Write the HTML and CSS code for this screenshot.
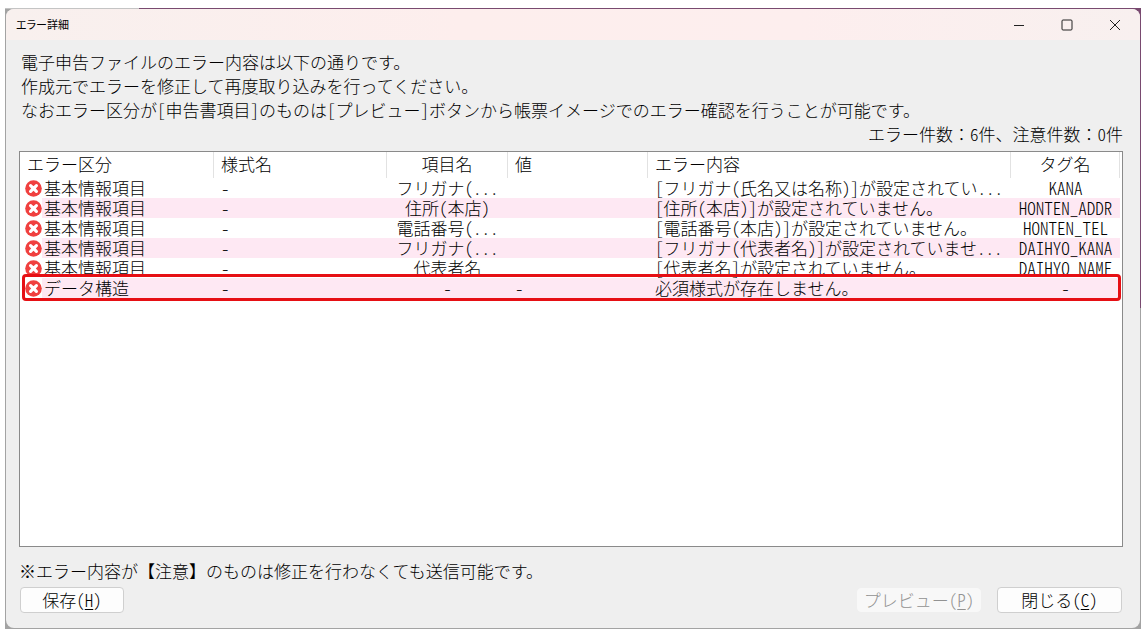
FILE: index.html
```html
<!DOCTYPE html>
<html lang="ja">

<head>
    <meta charset="UTF-8">
    <meta name="viewport" content="width=device-width, initial-scale=1.0">
    <title>エラー詳細</title>
    <link rel="stylesheet" href="styles.css">
</head>

<body>
    <!-- エラーアイコン -->
    <svg class="defs" width="0" height="0">
        <symbol id="err" viewBox="0 0 17 17">
            <circle cx="8.5" cy="8.5" r="8.3" fill="#f0403f" />
            <path d="M5.6 5.6l5.8 5.8M11.4 5.6l-5.8 5.8" stroke="#fff" stroke-width="3.2" stroke-linecap="round" />
        </symbol>
    </svg>

    <div class="frame">
        <div class="dialog">
            <!-- タイトルバー -->
            <header class="titlebar">
                <h1>エラー詳細</h1>
                <div class="controls">
                    <button type="button" aria-label="最小化">
                        <svg width="12" height="12" viewBox="0 0 12 12"><path d="M1 6.5h10" /></svg>
                    </button>
                    <button type="button" aria-label="最大化">
                        <svg width="12" height="12" viewBox="0 0 12 12"><rect x="1" y="1" width="10" height="10" rx="1" /></svg>
                    </button>
                    <button type="button" aria-label="閉じる">
                        <svg width="12" height="12" viewBox="0 0 12 12"><path d="M1 1l10 10M11 1L1 11" /></svg>
                    </button>
                </div>
            </header>

            <main class="content">
                <p class="text">電子申告ファイルのエラー内容は以下の通りです。</p>
                <p class="text">作成元でエラーを修正して再度取り込みを行ってください。</p>
                <p class="text">なおエラー区分が[申告書項目]のものは[プレビュー]ボタンから帳票イメージでのエラー確認を行うことが可能です。</p>
                <p class="count">エラー件数：<span>6</span>件、注意件数：<span>0</span>件</p>

                <!-- エラー一覧 -->
                <div class="list">
                    <table>
                        <colgroup>
                            <col class="col-kubun">
                            <col class="col-yoshiki">
                            <col class="col-item">
                            <col class="col-value">
                            <col>
                            <col class="col-tag">
                        </colgroup>
                        <thead>
                            <tr>
                                <th>エラー区分</th>
                                <th>様式名</th>
                                <th class="center">項目名</th>
                                <th>値</th>
                                <th>エラー内容</th>
                                <th class="center">タグ名</th>
                            </tr>
                        </thead>
                        <tbody>
                            <tr>
                                <td class="kubun"><div><svg><use href="#err" /></svg><span>基本情報項目</span></div></td>
                                <td>-</td>
                                <td class="center">フリガナ(...</td>
                                <td></td>
                                <td>[フリガナ(氏名又は名称)]が設定されてい...</td>
                                <td class="center">KANA</td>
                            </tr>
                            <tr>
                                <td class="kubun"><div><svg><use href="#err" /></svg><span>基本情報項目</span></div></td>
                                <td>-</td>
                                <td class="center">住所(本店)</td>
                                <td></td>
                                <td>[住所(本店)]が設定されていません。</td>
                                <td class="center">HONTEN_ADDR</td>
                            </tr>
                            <tr>
                                <td class="kubun"><div><svg><use href="#err" /></svg><span>基本情報項目</span></div></td>
                                <td>-</td>
                                <td class="center">電話番号(...</td>
                                <td></td>
                                <td>[電話番号(本店)]が設定されていません。</td>
                                <td class="center">HONTEN_TEL</td>
                            </tr>
                            <tr>
                                <td class="kubun"><div><svg><use href="#err" /></svg><span>基本情報項目</span></div></td>
                                <td>-</td>
                                <td class="center">フリガナ(...</td>
                                <td></td>
                                <td>[フリガナ(代表者名)]が設定されていませ...</td>
                                <td class="center">DAIHYO_KANA</td>
                            </tr>
                            <tr>
                                <td class="kubun"><div><svg><use href="#err" /></svg><span>基本情報項目</span></div></td>
                                <td>-</td>
                                <td class="center">代表者名</td>
                                <td></td>
                                <td>[代表者名]が設定されていません。</td>
                                <td class="center">DAIHYO_NAME</td>
                            </tr>
                            <tr class="marked">
                                <td class="kubun"><div><svg><use href="#err" /></svg><span>データ構造</span></div></td>
                                <td>-</td>
                                <td class="center">-</td>
                                <td>-</td>
                                <td>必須様式が存在しません。</td>
                                <td class="center">-</td>
                            </tr>
                        </tbody>
                    </table>
                </div>

                <p class="note">※エラー内容が【注意】のものは修正を行わなくても送信可能です。</p>

                <!-- ボタン -->
                <div class="buttons">
                    <button type="button" class="btn btn-save">保存(<u>H</u>)</button>
                    <button type="button" class="btn btn-preview" disabled>プレビュー(<u>P</u>)</button>
                    <button type="button" class="btn btn-close">閉じる(<u>C</u>)</button>
                </div>
            </main>
        </div>
    </div>
</body>

</html>
```
FILE: styles.css
```css
* {
    margin: 0;
    padding: 0;
    box-sizing: border-box;
}

body {
    display: flex;
    min-height: 100vh;
    padding: 8px 4px 6px 5px;
    background-color: #fff;
    color: #000;
    /* 英数字は半角幅にそろえる */
    font-family: "Noto Sans CJK JP", sans-serif;
    font-feature-settings: "hwid";
    font-size: 17px;
    font-weight: 300;
    line-height: 24px;
}

.defs {
    position: absolute;
}

/* ウィンドウの外枠 */
.frame {
    flex: 1;
    display: flex;
    min-width: 0;
    padding: 1px;
    background: linear-gradient(#c4c4c4, #c4c4c4) top left / 134px 1px no-repeat,
        linear-gradient(#a3a3a3, #a3a3a3) top left / 10px 100% no-repeat,
        linear-gradient(#794a70 300px, #a3a3a3 300px);
}

.dialog {
    flex: 1;
    display: flex;
    flex-direction: column;
    min-width: 0;
    border-radius: 8px;
    background-color: #efefef;
    overflow: hidden;
}

/* タイトルバー */
.titlebar {
    display: flex;
    justify-content: space-between;
    height: 31px;
    padding: 0 1px 0 10px;
    background: linear-gradient(to right, #f8f0ee, #fdeeed 40%, #fdeeee 70%, #f8f0ef);
}

.titlebar h1 {
    font-size: 11px;
    font-weight: 400;
    line-height: 30px;
    font-feature-settings: "palt";
}

.controls {
    display: flex;
}

.controls button {
    display: flex;
    align-items: center;
    justify-content: center;
    width: 48px;
    border: none;
    background: none;
}

.controls svg {
    fill: none;
    stroke: #222;
    stroke-width: 1;
}

.content {
    flex: 1;
    display: flex;
    flex-direction: column;
    padding: 10px 17px 15px 13px;
}

.text {
    padding-left: 2px;
}

.count {
    font-feature-settings: normal;
    text-align: right;
}

.count span {
    font-feature-settings: "hwid";
}

/* エラー一覧 */
.list {
    flex: 1;
    margin: 5px 0 12px;
    padding-right: 2px;
    border: 1px solid #8a8a8a;
    background-color: #fff;
}

table {
    width: 100%;
    table-layout: fixed;
    border-collapse: separate;
    border-spacing: 0;
}

.col-kubun {
    width: 194px;
}

.col-yoshiki {
    width: 173px;
}

.col-item {
    width: 121px;
}

.col-value {
    width: 140px;
}

.col-tag {
    width: 109px;
}

th {
    height: 26px;
    padding: 0 7px;
    border-right: 1px solid #e2e2e2;
    font-weight: 300;
    line-height: 24px;
    text-align: left;
    vertical-align: top;
    white-space: nowrap;
}

td {
    height: 20px;
    padding: 0 7px;
    line-height: 20px;
    white-space: nowrap;
}

th.center,
td.center {
    padding: 0;
    text-align: center;
}

td.kubun {
    padding: 0 0 0 5px;
}

.kubun div {
    display: flex;
    align-items: center;
}

.kubun svg {
    width: 17px;
    height: 17px;
}

.kubun span {
    flex: 1;
    padding-left: 2px;
}

tbody tr:nth-child(even) td:not(.kubun),
tbody tr:nth-child(even) .kubun span {
    background-color: #fee8f3;
}

/* 必須様式エラーの強調枠 */
.marked {
    position: relative;
}

.marked .kubun::after {
    content: "";
    position: absolute;
    top: -4px;
    right: -1px;
    bottom: -3px;
    left: 2px;
    border: 3px solid #e60f14;
    border-radius: 4px;
}

.note {
    margin-bottom: 4px;
}

/* ボタン */
.buttons {
    display: flex;
    align-items: center;
    gap: 16px;
    padding: 0 1px;
}

.btn {
    height: 26px;
    border: 1px solid #cfcfcf;
    border-radius: 4px;
    background-color: #fdfdfd;
    color: #000;
    font: inherit;
    font-feature-settings: inherit;
    line-height: 22px;
}

.btn u {
    text-underline-offset: 2px;
}

.btn-save {
    width: 104px;
    margin-right: auto;
}

.btn-preview {
    width: 124px;
    height: 24px;
    border-color: #f8f8f8;
    background-color: #f8f8f8;
    color: #929292;
}

.btn-close {
    width: 125px;
}
```
